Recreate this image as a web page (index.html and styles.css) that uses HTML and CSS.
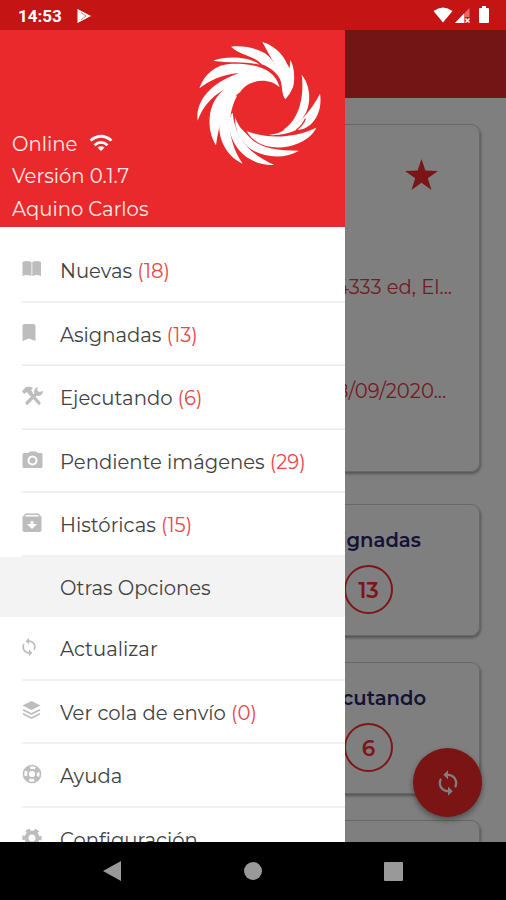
FILE: index.html
```html
<!DOCTYPE html>
<html lang="es">
<head>
    <meta charset="UTF-8">
    <meta name="viewport" content="width=device-width, initial-scale=1.0">
    <title>Menú</title>
    <link rel="stylesheet" href="styles.css">
</head>
<body>
    <svg class="defs" width="0" height="0">
        <symbol id="sync" viewBox="0 0 24 24">
            <path d="M12 4V1L8 5l4 4V6c3.310 0 6 2.690 6 6 0 1.010-.25 1.970-.7 2.800l1.460 1.460A7.930 7.930 0 0 0 20 12c0-4.420-3.580-8-8-8zm0 14c-3.310 0-6-2.690-6-6 0-1.010.25-1.970.7-2.800L5.240 7.740A7.930 7.930 0 0 0 4 12c0 4.420 3.580 8 8 8v3l4-4-4-4z"/>
        </symbol>
    </svg>

    <div class="phone">
        <div class="status-bar">
            <span class="clock">14:53</span>
            <svg class="play" width="16" height="16" viewBox="0 0 16 16">
                <path d="M1.500 1L15 8 1.500 15z" fill="#fff"/>
                <path d="M5 4.500L10 8l-5 4" fill="none" stroke="#dc7777" stroke-width="1"/>
            </svg>
            <div class="status-icons">
                <svg width="20" height="16" viewBox="0 0 20 16"><path d="M10 15.500L.5 4Q10-3 19.500 4z" fill="#fff"/></svg>
                <svg width="15" height="16" viewBox="0 0 15 16">
                    <path d="M0 16L14.500 1v9H10v6z" fill="#e56a6a"/>
                    <path d="M0 16L9 6.500V16z" fill="#fff"/>
                    <path d="M10.500 11.500l4 4m0-4l-4 4" stroke="#fff" stroke-width="1.500"/>
                </svg>
                <svg class="battery" width="10" height="17" viewBox="0 0 10 17"><path d="M3 0h4v2h2q1 0 1 1v13q0 1-1 1H1q-1 0-1-1V3q0-1 1-1h2z" fill="#fff"/></svg>
            </div>
        </div>

        <div class="screen">
            <div class="app-bar"></div>
            <div class="content">
                <div class="card order-card">
                    <svg class="star" width="33" height="31" viewBox="0 0 33 31"><path d="M16.500 0l3.900 11.600L33 12l-10.200 7.300L26.500 31l-10-7.200L6.500 31l3.700-11.700L0 12l12.600-.4z"/></svg>
                    <p class="address">4333 ed, El...</p>
                    <p class="date">8/09/2020...</p>
                </div>
                <div class="counters">
                    <div class="card counter">
                        <h3>Asignadas</h3>
                        <span class="circle">13</span>
                    </div>
                    <div class="card counter">
                        <h3>Ejecutando</h3>
                        <span class="circle">6</span>
                    </div>
                    <div class="card counter"></div>
                </div>
            </div>
            <div class="fab"><svg width="28" height="28"><use href="#sync"/></svg></div>
            <div class="overlay"></div>

            <div class="drawer">
                <div class="drawer-header">
                    <svg class="logo" width="150" height="145" viewBox="0 0 450 435">
                        <path d="M232 36C262 45 292 68 306 101L314 115 316 90C326 105 332 145 324 172Q316 192 301 208Q295 203 292 184C289 145 276 110 258 83Q248 66 232 36z"/>
                        <path d="M138 50C180 45 222 58 240 70C265 88 285 120 289 155C277 130 258 113 230 103C205 75 164 76 138 50z"/>
                        <path d="M85 92C125 76 195 80 224 104C185 94 135 100 85 92z"/>
                        <path d="M43 175C58 132 92 103 140 101C195 100 267 108 284 172C250 140 190 148 165 187Q154 193 145 207C119 229 103 277 93 346C63 299 65 220 116 179C78 202 53 230 38 272C31 225 64 162 163 129C108 134 75 151 43 175z"/>
                        <path d="M157 196C129 247 121 324 173 401C112 374 85 295 115 233Q129 209 157 196z"/>
                        <path d="M143 248C150 320 188 369 268 405C191 409 128 347 133 273Q136 254 143 248z"/>
                        <path d="M150 262C165 300 180 306 190 318C217 350 262 362 342 362C295 391 221 382 183 346Q148 310 150 262z"/>
                        <path d="M186 304C250 327 325 325 394 293C366 350 265 371 213 334Q194 321 186 304z"/>
                        <path d="M251 315Q288 311 300 297C338 287 374 249 405 191C414 245 384 299 334 300Q296 318 251 315z"/>
                        <path d="M350 134C381 170 383 244 340 276Q324 294 294 299C335 276 360 212 350 134z"/>
                        <path class="cut" d="M334 300Q355 285 361 266"/>
                    </svg>
                    <p class="online">Online
                        <svg width="24" height="20" viewBox="0 0 24 20"><path d="M1.500 6.500Q12-2 22.500 6.500M5.500 11.200Q12 5.500 18.500 11.200" fill="none" stroke="#fff" stroke-width="2.800"/><path d="M8.500 13.500Q12 11 15.500 13.500L12 17z" fill="#fff"/></svg>
                    </p>
                    <p>Versión 0.1.7</p>
                    <p>Aquino Carlos</p>
                </div>
                <div class="menu">
                    <div class="item">
                        <svg viewBox="0 0 21 21"><path d="M.5 3Q5 1 9.500 3v14Q5 15 .5 17zM10.300 3Q15 1 19 3V17Q15 15 10.300 17z"/></svg>
                        <span>Nuevas <b>(18)</b></span>
                    </div>
                    <div class="item">
                        <svg viewBox="0 0 21 21"><path d="M.5 3q0-2 2-2h9q2 0 2 2v15L7 15.500.5 18z"/></svg>
                        <span>Asignadas <b>(13)</b></span>
                    </div>
                    <div class="item">
                        <svg viewBox="0 0 21 21">
                            <path d="M0 5l4-4q4-1 7 1L9 4l2 3-3 3-3-4-3 2z"/>
                            <path d="M8 7l9 10M5 17l9-9" fill="none" stroke="#bdbdbd" stroke-width="3.300" stroke-linecap="round"/>
                            <path d="M12 6q0-4 4-5l-1 3 2 2 4-1q0 4-4 5-4 0-5-4z"/>
                        </svg>
                        <span>Ejecutando <b>(6)</b></span>
                    </div>
                    <div class="item">
                        <svg viewBox="0 0 21 21"><path fill-rule="evenodd" d="M2 3h4l2-1.500h6L16 3h3q1.500 0 1.500 1.500v12q0 1.500-1.500 1.500H2q-1.500 0-1.500-1.500v-12Q.5 3 2 3zm8.500 2.500a5 5 0 1 0 .01 0z"/><circle cx="10.500" cy="10.500" r="3"/></svg>
                        <span>Pendiente imágenes <b>(29)</b></span>
                    </div>
                    <div class="item">
                        <svg viewBox="0 0 21 21"><path fill-rule="evenodd" d="M3.500.5h13l3 3.500v13q0 2-2 2h-15q-2 0-2-2V4zM4 2L3 3.500h14L16 2zM8.500 8v3H5l5 5 5-5h-3.500V8z"/></svg>
                        <span>Históricas <b>(15)</b></span>
                    </div>
                    <div class="section">Otras Opciones</div>
                    <div class="item">
                        <svg viewBox="3 0 21 21"><use href="#sync" width="20" height="20"/></svg>
                        <span>Actualizar</span>
                    </div>
                    <div class="item">
                        <svg viewBox="0 0 21 21"><path d="M9.500 0L18.500 4.500 9.500 9 .5 4.500z"/><path d="M1 8.700l8.500 4.300L18 8.700M1 12.800l8.500 4.300 8.500-4.300" fill="none" stroke="#bdbdbd" stroke-width="1.800"/></svg>
                        <span>Ver cola de envío <b>(0)</b></span>
                    </div>
                    <div class="item">
                        <svg viewBox="0 0 21 21"><g fill="none" stroke="#bdbdbd"><circle cx="10" cy="10" r="8.500" stroke-width="1.600"/><circle cx="10" cy="10" r="4" stroke-width="1.800"/><circle cx="10" cy="10" r="6.500" stroke-width="3.500" stroke-dasharray="5 5.210" stroke-dashoffset="-2.600"/></g></svg>
                        <span>Ayuda</span>
                    </div>
                    <div class="item">
                        <svg viewBox="0 0 21 21"><g fill="none" stroke="#bdbdbd"><circle cx="10" cy="10" r="5.500" stroke-width="4"/><circle cx="10" cy="10" r="8.200" stroke-width="3" stroke-dasharray="4.300 4.286" stroke-dashoffset="-6.440"/></g></svg>
                        <span>Configuración</span>
                    </div>
                </div>
            </div>
        </div>

        <div class="nav-bar">
            <svg width="506" height="58" viewBox="0 0 506 58" fill="#999">
                <path d="M103 29l18-10v20z"/>
                <circle cx="253" cy="29" r="9"/>
                <rect x="384" y="20" width="19" height="19" rx="1"/>
            </svg>
        </div>
    </div>
</body>
</html>
```
FILE: styles.css
```css
/* Basic styling */
* {
    box-sizing: border-box;
}
body {
    font-family: Montserrat, Inter, sans-serif;
    font-size: 19.6px;
    margin: 0;
}
p,
h3 {
    margin: 0;
}
svg {
    display: block;
    flex: none;
}
.defs {
    position: absolute;
}
.phone {
    width: 506px;
    height: 900px;
    display: flex;
    flex-direction: column;
    overflow: hidden;
}

/* Status bar */
.status-bar {
    height: 30px;
    flex: none;
    display: flex;
    align-items: center;
    padding: 2px 17px 0 18px;
    background-color: #c41414;
    color: #fff;
    font-family: Roboto, sans-serif;
    font-size: 17px;
    font-weight: 700;
}
.play {
    margin-left: 14px;
}
.status-icons {
    display: flex;
    align-items: center;
    margin: -3px 0 0 auto;
    gap: 2px;
}
.battery {
    margin-left: 7px;
}

/* Page behind the menu */
.screen {
    position: relative;
    flex: 1;
    overflow: hidden;
    background-color: #fff;
}
.app-bar {
    height: 68px;
    background-color: #e7292b;
}
.content {
    padding: 26px 26px 0;
}
.card {
    border: 1px solid #d0d0d0;
    border-radius: 9px;
    box-shadow: 1px 2px 3px rgba(0, 0, 0, 0.35);
}
.order-card {
    height: 348px;
    margin-bottom: 32px;
    padding: 34px 0 0 309px;
    color: #e7384a;
    white-space: nowrap;
}
.star {
    margin-left: 69px;
    fill: #f62a2d;
}
.address {
    margin-top: 85px;
    line-height: 24px;
}
.date {
    margin-top: 80px;
    line-height: 24px;
}
.counters {
    display: grid;
    grid-template-columns: 223px;
    grid-auto-rows: 132px;
    gap: 26px;
    justify-content: end;
}
.counter {
    display: flex;
    flex-direction: column;
    align-items: center;
    padding-top: 22px;
}
.counter h3 {
    font-size: 19.6px;
    font-weight: 600;
    line-height: 27px;
    color: #262668;
}
.circle {
    width: 49px;
    height: 49px;
    margin-top: 11px;
    border: 2px solid #ff2a2d;
    border-radius: 50%;
    font-size: 21.5px;
    font-weight: 600;
    line-height: 47px;
    text-align: center;
    color: #ff2a2d;
}
.fab {
    position: absolute;
    right: 24px;
    bottom: 25px;
    width: 69px;
    height: 69px;
    display: flex;
    align-items: center;
    justify-content: center;
    border-radius: 50%;
    background-color: #f6292b;
    box-shadow: 0 3px 6px rgba(0, 0, 0, 0.4);
    fill: #fff;
}
.overlay {
    position: absolute;
    inset: 0;
    background-color: rgba(0, 0, 0, 0.5);
}

/* Side menu */
.drawer {
    position: absolute;
    top: 0;
    left: 0;
    width: 345px;
    height: 100%;
    overflow: hidden;
    background-color: #fff;
}
.drawer-header {
    position: relative;
    height: 197px;
    padding: 98px 0 0 12px;
    background-color: #e9292b;
    color: #ffe9e9;
}
.drawer-header p {
    line-height: 32.4px;
}
.logo {
    position: absolute;
    top: 0;
    left: 185px;
    fill: #fff;
}
.cut {
    fill: none;
    stroke: #e9292b;
    stroke-width: 4;
}
.online {
    display: flex;
    align-items: center;
    gap: 12px;
}
.menu {
    padding-top: 12px;
}
.item {
    height: 63.5px;
    display: flex;
    align-items: center;
    gap: 17px;
    margin-left: 22px;
    border-bottom: 2px solid #f0f0f0;
    color: #424242;
    white-space: nowrap;
}
.item svg {
    width: 21px;
    height: 21px;
    fill: #bdbdbd;
}
.item span {
    padding-top: 3px;
}
.item b {
    font-weight: 400;
    color: #e9474a;
}
.section {
    height: 60.5px;
    padding-left: 60px;
    line-height: 62px;
    background-color: #f3f3f3;
    color: #424242;
}

/* Bottom navigation */
.nav-bar {
    height: 58px;
    flex: none;
    background-color: #000;
}
```
